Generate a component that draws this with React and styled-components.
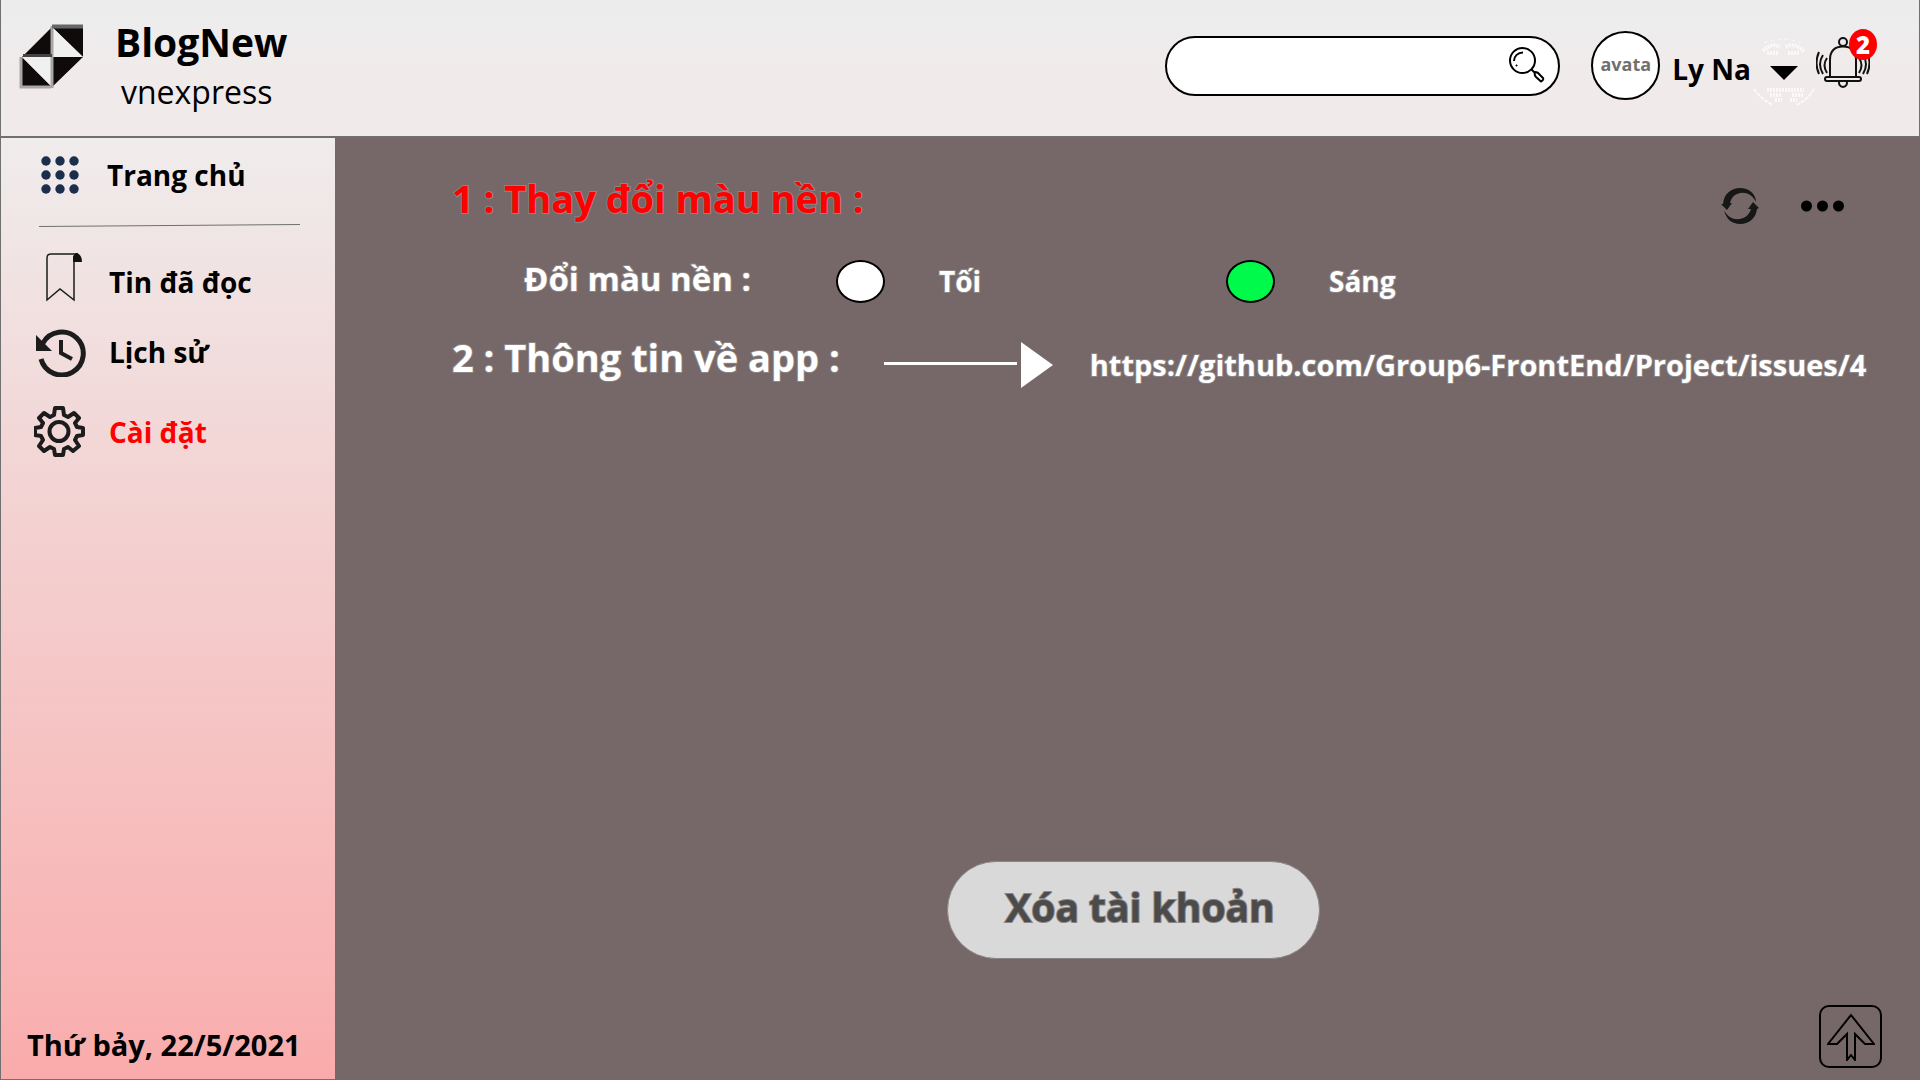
import React, { useState } from "react";
import styled, { createGlobalStyle } from "styled-components";

const GlobalStyle = createGlobalStyle`
  *, *::before, *::after { box-sizing: border-box; }
  body {
    margin: 0;
    background: #766868;
    color: #000;
    font-family: "Open Sans", "Noto Sans", sans-serif;
  }
  button { padding: 0; border: 0; background: none; font: inherit; color: inherit; cursor: pointer; }
  a { color: inherit; text-decoration: none; }
  svg { display: block; flex: none; }
`;

const Page = styled.div`
  display: grid;
  grid-template-rows: auto 1fr;
  min-height: 100vh;
`;

const Header = styled.header`
  display: flex;
  align-items: flex-start;
  justify-content: space-between;
  height: 138px;
  padding: 0 49px 0 18px;
  border: solid #707070;
  border-width: 0 1px 2px 1px;
  background: linear-gradient(#ececec, #eeeced 20%, #f0ebeb 50%, #f0eaea);
`;

const Brand = styled.div`
  display: flex;
  gap: 30px;
  padding-top: 16px;
`;

const Logo = styled.svg`
  margin-top: 8px;
`;

const BrandName = styled.h1`
  margin: 0;
  font-size: 39px;
  line-height: 52px;
  font-weight: 700;
`;

const BrandSub = styled.p`
  margin: 0 0 0 6px;
  font-size: 32px;
  line-height: 48px;
  font-weight: 400;
`;

const Tools = styled.div`
  display: flex;
  align-items: flex-start;
`;

const SearchBox = styled.form`
  display: flex;
  align-items: center;
  width: 395px;
  height: 60px;
  margin: 36px 31px 0 0;
  padding: 0 13px 0 28px;
  border: 2px solid #000;
  border-radius: 30px;
  background: #fff;
`;

const SearchInput = styled.input`
  flex: 1;
  min-width: 0;
  border: 0;
  outline: 0;
  background: none;
  font: inherit;
  font-size: 24px;
`;

const SearchButton = styled.button`
  margin-bottom: 3px;
`;

const Avatar = styled.div`
  display: grid;
  place-items: center;
  width: 69px;
  height: 69px;
  margin: 31px 12px 0 0;
  padding-bottom: 4px;
  border: 2px solid #000;
  border-radius: 50%;
  background: #fff;
  color: #707070;
  font-size: 18px;
  font-weight: 700;
`;

const UserMenu = styled.button`
  display: flex;
  align-items: center;
  height: 78px;
  margin-top: 35px;
  font-size: 28px;
  font-weight: 700;
`;

const UserName = styled.span`
  line-height: 40px;
  margin-bottom: 10px;
`;

const BellButton = styled.button`
  position: relative;
  margin: 36px 0 0 0;
`;

const Badge = styled.span`
  position: absolute;
  top: -7px;
  right: -7px;
  display: grid;
  place-items: center;
  width: 28px;
  height: 31px;
  border-radius: 50%;
  background: #f00;
  color: #fff;
  font-size: 24px;
  line-height: 31px;
  font-weight: 800;
`;

const Body = styled.div`
  display: grid;
  grid-template-columns: 335px 1fr;
`;

const Sidebar = styled.aside`
  display: flex;
  flex-direction: column;
  border: solid #707070;
  border-width: 0 0 1px 1px;
  background: linear-gradient(#f0ecec, #f1e1e1 17%, #f3d4d4 36%, #f9b1b1 93%, #f9abab);
`;

const Nav = styled.nav`
  display: flex;
  flex-direction: column;
`;

const NavItem = styled.a`
  display: flex;
  align-items: center;
  height: ${(p) => p.$height}px;
  padding-left: 33px;
  color: ${(p) => (p.$active ? "#f00" : "#000")};
  font-size: 28px;
  line-height: 40px;
  font-weight: 700;
`;

const NavIcon = styled.span`
  display: grid;
  place-items: center;
  width: 52px;
  margin-right: ${(p) => p.$gap}px;
`;

const Divider = styled.svg`
  margin-left: 38px;
`;

const Today = styled.p`
  margin: auto 0 12px 26px;
  font-size: 29px;
  line-height: 44px;
  font-weight: 700;
`;

const Main = styled.main`
  display: flex;
  flex-direction: column;
  padding: 26px 38px 12px 117px;
  color: #fff;
  font-weight: 700;
`;

const Row = styled.div`
  display: flex;
  align-items: center;
  height: ${(p) => p.$height}px;
`;

const Outlined = styled.span`
  paint-order: stroke fill;
  -webkit-text-stroke: 2px #8b8585;
`;

const SectionTitle = styled(Outlined).attrs({ as: "h2" })`
  margin: 0;
  color: ${(p) => (p.$accent ? "#f00" : "#fff")};
  font-size: 38px;
  line-height: 52px;
  font-weight: 700;
  white-space: nowrap;
`;

const Actions = styled.div`
  display: flex;
  align-items: center;
  gap: 42px;
  margin: 16px 38px 0 auto;
`;

const Choices = styled.div`
  display: flex;
  align-items: center;
  height: 94px;
  padding-left: 72px;
`;

const ChoicesTitle = styled(Outlined)`
  width: 312px;
  font-size: 33px;
  line-height: 48px;
  white-space: nowrap;
`;

const Choice = styled.label`
  display: flex;
  align-items: center;
  gap: 54px;
  width: 390px;
  padding-top: 4px;
  font-size: 28px;
  line-height: 40px;
`;

const Radio = styled.input`
  appearance: none;
  width: 49px;
  height: 43px;
  margin: 0;
  border: 2px solid #000;
  border-radius: 50%;
  background: #fff;
  cursor: pointer;
  &:checked { background: #00fa4b; }
`;

const Arrow = styled.svg`
  margin: 16px 37px 0 44px;
`;

const RepoLink = styled(Outlined).attrs({ as: "a" })`
  margin-top: 16px;
  font-size: 29px;
  line-height: 40px;
  white-space: nowrap;
`;

const DeleteButton = styled.button`
  align-self: center;
  width: 373px;
  height: 98px;
  margin: auto 68px 46px 0;
  padding: 0 0 8px 14px;
  border: 1px solid #8b8585;
  border-radius: 49px;
  background: #d9d9d9;
  color: #4b4b4b;
  font-size: 39px;
  font-weight: 700;
`;

const TopButton = styled.button`
  align-self: flex-end;
  display: grid;
  place-items: center;
  width: 63px;
  height: 63px;
  border: 2px solid #000;
  border-radius: 10px;
`;

const LogoMark = () => (
  <Logo width="66" height="66" viewBox="0 0 66 66" aria-label="BlogNew" role="img">
    <path d="M3 33 33 3V33ZM3 33V63H33ZM33 3H64V33ZM33 33H64L33 63Z" fill="#0f0b0a" />
    <path d="M3 33 33 63V33ZM33 3 64 33H33Z" fill="#f1f0f0" />
    <path d="M33 2V64M2 33V63H32" stroke="#a9a6a6" strokeWidth="3" fill="none" />
    <path d="M33 2.500H64" stroke="#666" strokeWidth="4" />
    <path d="M4 31.500H33" stroke="#444" strokeWidth="3" />
  </Logo>
);

const SearchIcon = () => (
  <svg width="36" height="36" viewBox="0 0 36 36" fill="none" stroke="#000" strokeWidth="2">
    <circle cx="13.500" cy="13.500" r="12.500" />
    <path d="M5 14C5 9 9 5.500 14 5.500" />
    <circle cx="7.500" cy="18.500" r=".6" fill="#000" strokeWidth="1" />
    <path d="M22.500 22.500 26 26M26 25Q29 25 31 28L34 31Q35 33 32 34.500L27 30Q25 28 26 25Z" strokeLinejoin="round" />
  </svg>
);

const CaretWithHalo = () => (
  <svg width="65" height="78" viewBox="1 0 65 78">
    <g fill="none" stroke="#fff" opacity=".75">
      <path d="M14 8Q34 0 51 8" strokeDasharray="4 3" />
      <path d="M13 16Q22 7 30 12M36 12Q44 7 54 16M17 18H28M38 18H50" strokeWidth="4" strokeDasharray="2 1" />
      <path d="M17 55H54M20 60H31M42 60H53M25 65H32M40 65H47" strokeWidth="4" strokeDasharray="2 1" />
      <path d="M4 54Q12 65 23 70M64 54Q58 65 46 70" strokeWidth="2" strokeDasharray="4 1" />
    </g>
    <path d="M20 31H48L34 45Z" fill="#000" />
  </svg>
);

const BellIcon = () => (
  <svg width="54" height="54" viewBox="0 0 54 54" fill="none" stroke="#111" strokeWidth="2">
    <circle cx="27" cy="6" r="4" />
    <path d="M14 41V24C14 15 19 10.500 27 10.500S40 15 40 24V41" />
    <rect x="9" y="41" width="36" height="4" rx="2" />
    <path d="M23.500 45A4 4 0 1 0 30.500 45" />
    <path d="M11 22Q6 29 11 37M7 19Q1 28 7 38M3 16Q-2 27 3 38M43 22Q48 29 43 37M47 19Q53 28 47 38M51 16Q56 27 51 38" />
  </svg>
);

const GridIcon = () => (
  <svg width="40" height="40" viewBox="0 0 40 40" fill="#1b2e4b">
    {[6, 20, 34].map((y) => [6, 20, 34].map((x) => <circle key={x + "-" + y} cx={x} cy={y} r="4.700" />))}
  </svg>
);

const BookmarkIcon = () => (
  <svg width="44" height="60" viewBox="-7 0 44 60">
    <path d="M29 4V48L15 37 2 48V6Q2 2 6 2H33" fill="none" stroke="#1a1d17" strokeWidth="1.500" />
    <path d="M28 10V5Q29 1 32 1Q37 3 37 10Z" fill="#111" />
  </svg>
);

const HistoryIcon = () => (
  <svg width="52" height="50" viewBox="-1 0 52 50">
    <path d="M8 16A21.500 21.500 0 1 1 6 32" fill="none" stroke="#1c1c1c" strokeWidth="5" />
    <path d="M1 8V24H17Z" fill="#1c1c1c" />
    <path d="M26 13V26L37 32" fill="none" stroke="#1c1c1c" strokeWidth="4" />
  </svg>
);

const GearIcon = () => (
  <svg width="52" height="52" viewBox="1 1 52 52" fill="none" stroke="#1c1c1c" strokeWidth="4" strokeLinejoin="round">
    <path d="M22 3H30L31 10 35 12 41 8 46 13 42 18 44 22 50 23V30L44 31 42 35 46 41 40 46 35 42 31 44 30 50H22L21 44 17 42 11 46 6 41 10 35 8 31 2 30V23L8 22 10 18 6 13 11 8 17 12 21 10Z" />
    <circle cx="26" cy="26.500" r="9.500" />
  </svg>
);

const RefreshIcon = () => (
  <svg width="38" height="36" viewBox="0 0 38 36" fill="#171717">
    <path d="M2 16C3 5 11 0 19 0C28 0 35 6 35 14C29 1 12 2 9 15L11 15 6 22 0 16Z" />
    <path d="M3 22C5 31 11 36 19 36C28 36 35 30 36 21L38 20 32 14 27 21H30C26 34 9 35 3 22Z" />
  </svg>
);

const MoreIcon = () => (
  <svg width="43" height="12" viewBox="0 0 43 12">
    <circle cx="5.500" cy="6" r="5.500" />
    <circle cx="21.500" cy="6" r="5.500" />
    <circle cx="37.500" cy="6" r="5.500" />
  </svg>
);

const UpIcon = () => (
  <svg width="48" height="48" viewBox="0 0 48 48" fill="none" stroke="#000" strokeWidth="2">
    <path d="M24 2 47 31H38L28 21V47L24 42 20 47V21L10 31H1Z" />
  </svg>
);

export default function App() {
  const [theme, setTheme] = useState("light");
  const pick = (e) => setTheme(e.target.value);

  return (
    <>
      <GlobalStyle />
      <Page>
        <Header>
          <Brand>
            <LogoMark />
            <div>
              <BrandName>BlogNew</BrandName>
              <BrandSub>vnexpress</BrandSub>
            </div>
          </Brand>
          <Tools>
            <SearchBox role="search" onSubmit={(e) => e.preventDefault()}>
              <SearchInput type="text" aria-label="Tìm kiếm" />
              <SearchButton type="submit" aria-label="Tìm kiếm"><SearchIcon /></SearchButton>
            </SearchBox>
            <Avatar>avata</Avatar>
            <UserMenu type="button">
              <UserName>Ly Na</UserName>
              <CaretWithHalo />
            </UserMenu>
            <BellButton type="button" aria-label="Thông báo">
              <BellIcon />
              <Badge>2</Badge>
            </BellButton>
          </Tools>
        </Header>

        <Body>
          <Sidebar>
            <Nav>
              <NavItem href="#home" $height={74}>
                <NavIcon $gap={21}><GridIcon /></NavIcon>
                Trang chủ
              </NavItem>
              <Divider width="261" height="28" viewBox="0 0 261 28">
                <path d="M0 14.500 261 12.500" stroke="#707070" />
              </Divider>
              <NavItem href="#read" $height={84}>
                <NavIcon $gap={23}><BookmarkIcon /></NavIcon>
                Tin đã đọc
              </NavItem>
              <NavItem href="#history" $height={56}>
                <NavIcon $gap={23}><HistoryIcon /></NavIcon>
                Lịch sử
              </NavItem>
              <NavItem href="#settings" $height={104} $active>
                <NavIcon $gap={23}><GearIcon /></NavIcon>
                Cài đặt
              </NavItem>
            </Nav>
            <Today>Thứ bảy, 22/5/2021</Today>
          </Sidebar>

          <Main>
            <Row $height={68}>
              <SectionTitle $accent>1 : Thay đổi màu nền :</SectionTitle>
              <Actions>
                <button type="button" aria-label="Tải lại"><RefreshIcon /></button>
                <button type="button" aria-label="Thêm"><MoreIcon /></button>
              </Actions>
            </Row>
            <Choices role="radiogroup" aria-labelledby="theme-title">
              <ChoicesTitle id="theme-title">Đổi màu nền :</ChoicesTitle>
              <Choice>
                <Radio type="radio" name="theme" value="dark" checked={theme === "dark"} onChange={pick} />
                <Outlined>Tối</Outlined>
              </Choice>
              <Choice>
                <Radio type="radio" name="theme" value="light" checked={theme === "light"} onChange={pick} />
                <Outlined>Sáng</Outlined>
              </Choice>
            </Choices>
            <Row $height={62}>
              <SectionTitle>2 : Thông tin về app :</SectionTitle>
              <Arrow width="169" height="46" viewBox="0 0 169 46" fill="#fff">
                <path d="M0 20H133V23H0ZM137 0V46L169 23Z" />
              </Arrow>
              <RepoLink href="https://github.com/Group6-FrontEnd/Project/issues/4">
                https://github.com/Group6-FrontEnd/Project/issues/4
              </RepoLink>
            </Row>
            <DeleteButton type="button"><Outlined>Xóa tài khoản</Outlined></DeleteButton>
            <TopButton type="button" aria-label="Lên đầu trang"><UpIcon /></TopButton>
          </Main>
        </Body>
      </Page>
    </>
  );
}
